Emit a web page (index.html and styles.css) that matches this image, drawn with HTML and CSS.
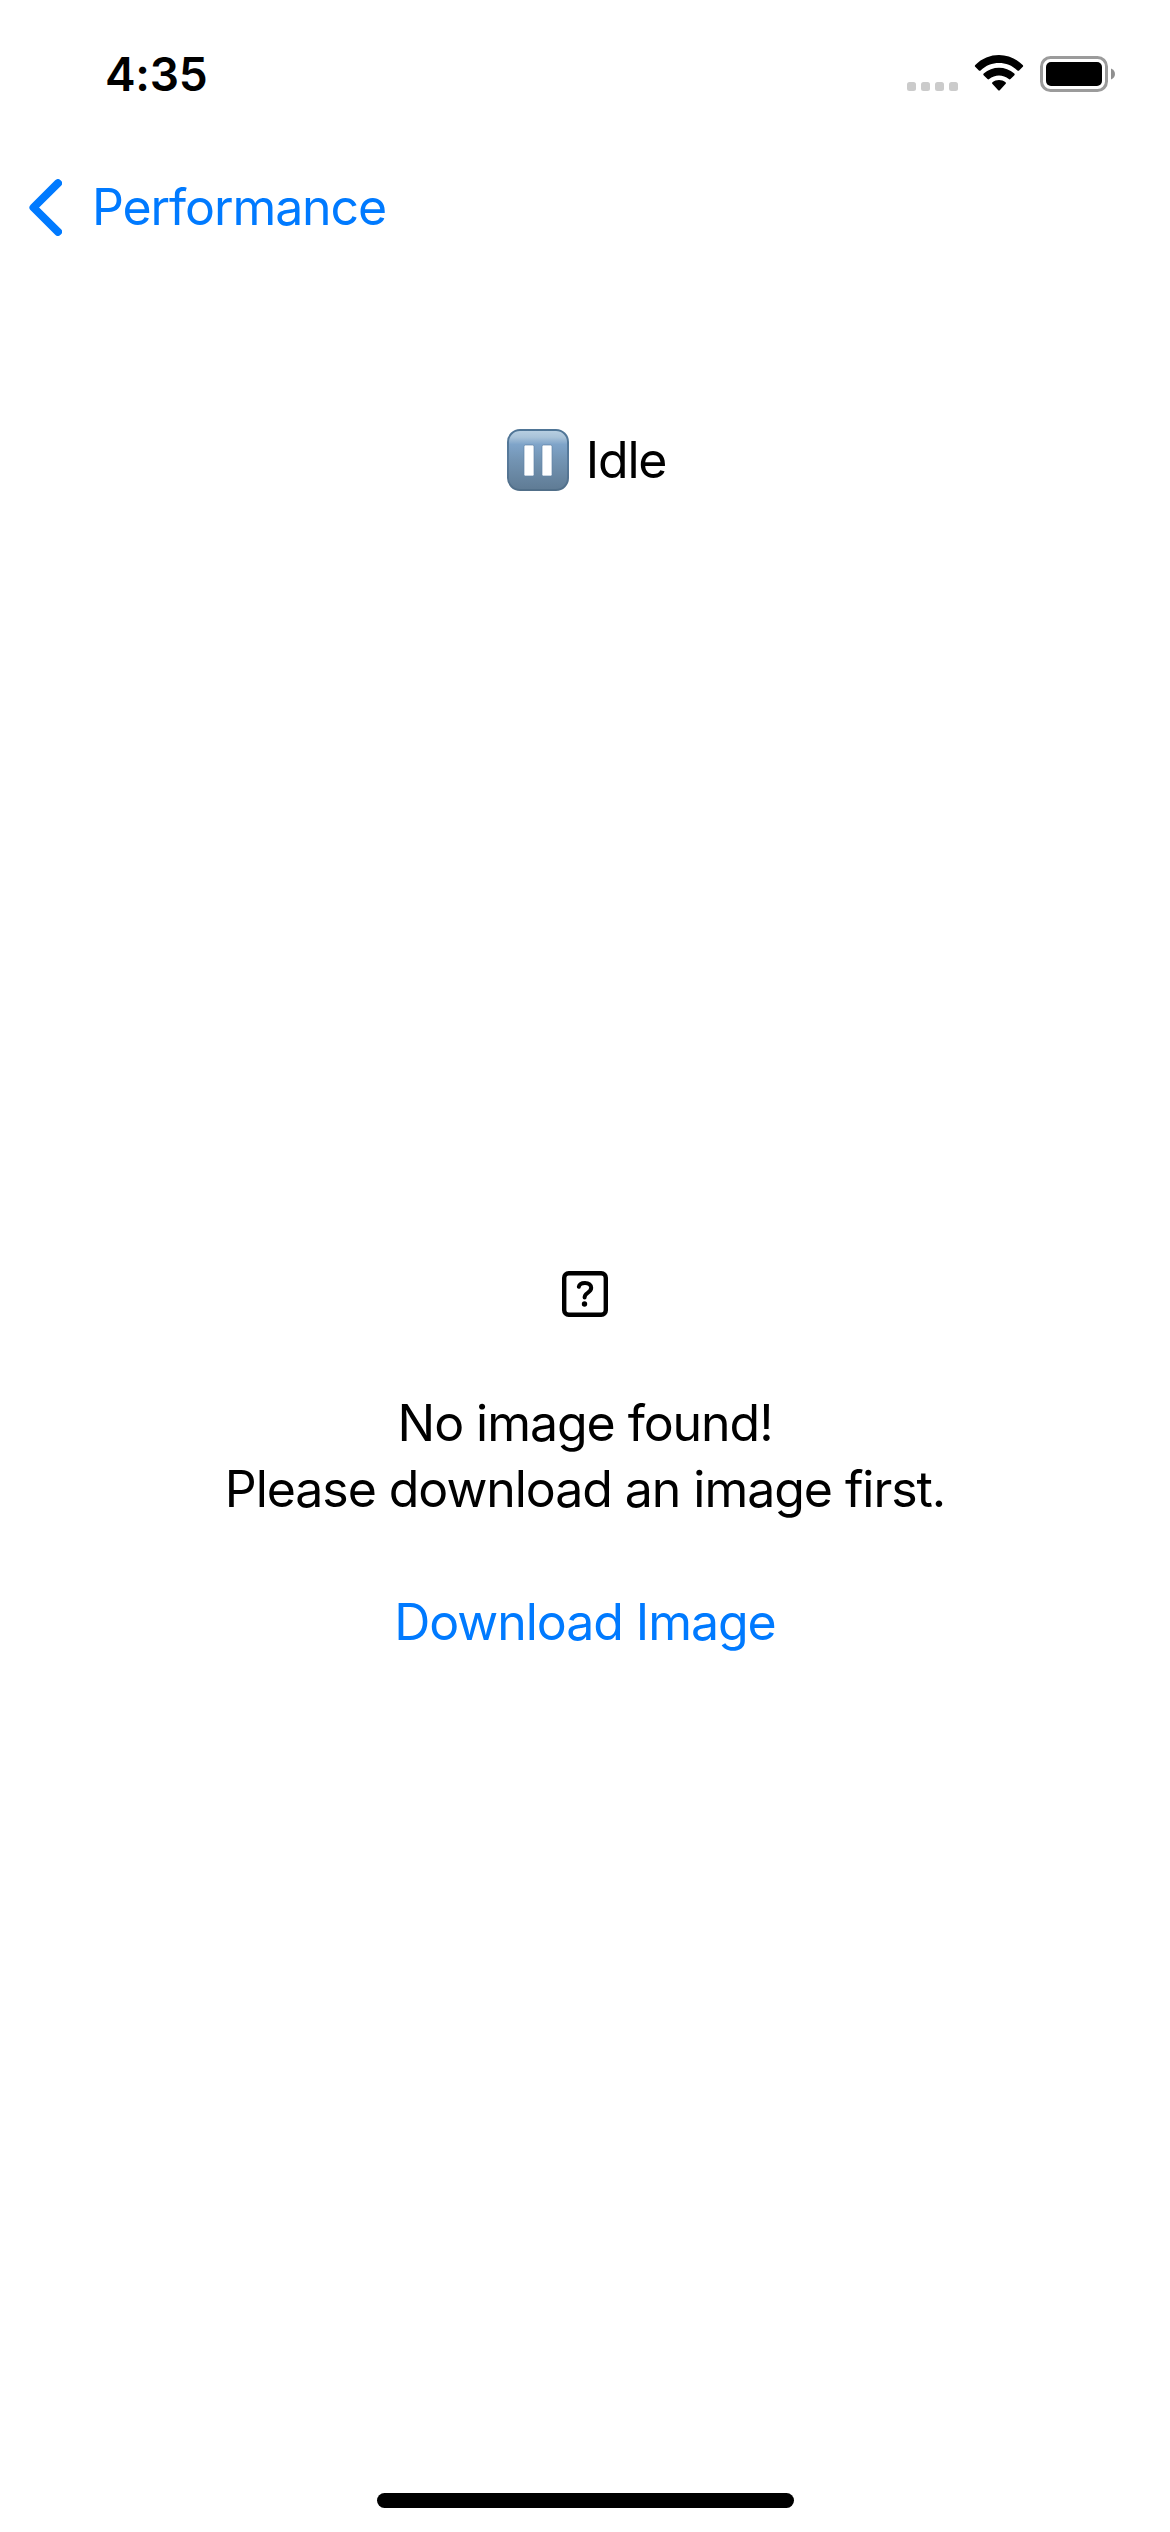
FILE: index.html
```html
<!DOCTYPE html>
<html lang="en">
<head>
<meta charset="utf-8">
<title>Performance</title>
<link rel="stylesheet" href="styles.css">
</head>
<body>
<div class="screen">
  <header class="status-bar">
    <span class="time">4:35</span>
    <div class="indicators">
      <svg class="cellular" width="51" height="9" viewBox="0 0 51 9" fill="#cbcbcb"><rect width="9" height="9" rx="2.5"/><rect x="14" width="9" height="9" rx="2.5"/><rect x="28" width="9" height="9" rx="2.5"/><rect x="42" width="9" height="9" rx="2.5"/></svg>
      <svg class="wifi" width="50" height="36" viewBox="0 0 50 36"><path d="M1.2 11.8Q0.4 10.9 1.3 10C14.5-3.3 35.5-3.3 48.7 10Q49.6 10.9 48.8 11.8L45.1 15.4Q44.3 16.2 43.4 15.4C33 5.6 17 5.6 6.6 15.4Q5.700 16.200 4.900 15.400Z"/><path d="M9.600 20.300Q8.800 19.400 9.700 18.600C18.500 10.700 31.500 10.700 40.300 18.600Q41.200 19.400 40.400 20.300L36.500 24Q35.700 24.800 34.800 24C29.200 19.300 20.800 19.300 15.200 24Q14.300 24.800 13.500 24Z"/><path d="M18.300 28.800Q17.500 27.900 18.500 27.200C22.200 24.400 27.800 24.400 31.500 27.200Q32.500 27.900 31.700 28.800L26 34.900Q25 36 24 34.900Z"/></svg>
      <svg class="battery" width="75" height="36" viewBox="0 0 75 36"><rect x="1.500" y="1.500" width="65" height="33" rx="9" fill="none" stroke="#9b9b9b" stroke-width="3"/><rect x="6" y="6" width="56" height="24" rx="5"/><path d="M71 12.500C76.300 14.500 76.300 21.500 71 23.500Z" fill="#8f8f8f"/></svg>
    </div>
  </header>
  <nav class="nav-bar">
    <a class="back"><svg width="33" height="57" viewBox="0 0 33 57"><path d="M29 4.200L4.500 28.500L29 52.800" fill="none" stroke="currentColor" stroke-width="8" stroke-linecap="round" stroke-linejoin="round"/></svg><span class="back-label">Performance</span></a>
  </nav>
  <main class="content">
    <div class="state">
      <svg width="62" height="62" viewBox="0 0 62 62">
        <defs>
          <linearGradient id="face" x2="0" y2="1"><stop offset="0" stop-color="#b9d0e2"/><stop offset=".12" stop-color="#a9c3d9"/><stop offset=".24" stop-color="#7fa4c9"/><stop offset=".5" stop-color="#7394b3"/><stop offset="1" stop-color="#5f7b94"/></linearGradient>
          <linearGradient id="rim" x2="0" y2="1"><stop offset="0" stop-color="#4f7596"/><stop offset=".5" stop-color="#587a9b"/><stop offset="1" stop-color="#516f89"/></linearGradient>
        </defs>
        <rect x="1" y="1" width="60" height="60" rx="12" fill="url(#face)" stroke="url(#rim)" stroke-width="2"/>
        <rect x="17" y="16" width="10" height="31" rx="1.500" fill="#fff" stroke="#6284a6" stroke-width=".7"/><rect x="35" y="16" width="10" height="31" rx="1.500" fill="#fff" stroke="#6284a6" stroke-width=".7"/>
      </svg>
      <span class="state-label">Idle</span>
    </div>
    <section class="empty">
      <svg width="46" height="46" viewBox="0 0 46 46" fill="none" stroke="#000" stroke-linecap="round" stroke-linejoin="round"><rect x="2.200" y="2.200" width="41.600" height="41.600" rx="4.500" stroke-width="4.400"/><path d="M16.800 15.800C17.300 12.900 19.700 11.900 23 11.900C26.800 11.900 29.200 13.800 29.200 16.800C29.200 19.500 27.500 20.700 25.400 22.100C23.300 23.500 22.600 24.500 22.600 26.600" stroke-width="4"/><circle cx="22.500" cy="33" r="2.700" fill="#000" stroke="none"/></svg>
      <p class="message"><span class="line-one">No image found!</span><br><span class="line-two">Please download an image first.</span></p>
      <a class="download">Download Image</a>
    </section>
  </main>
  <footer class="home"><div class="home-indicator"></div></footer>
</div>
</body>
</html>
```
FILE: styles.css
```css
* { box-sizing: border-box; }
body { margin: 0; background: #fff; }
.screen {
  width: 1170px;
  height: 2532px;
  display: flex;
  flex-direction: column;
  font: 400 50px/66px Inter, "Liberation Sans", sans-serif;
  color: #000;
}
.screen svg { display: block; flex: none; }
.status-bar {
  height: 141px;
  padding: 41px 55px 0 105px;
  display: flex;
  justify-content: space-between;
  align-items: flex-start;
}
.time { font-size: 46px; font-weight: 600; letter-spacing: -.3px; white-space: nowrap; }
.indicators { display: flex; padding-top: 14px; }
.cellular { margin: 27px 16px 0 0; }
.wifi { margin-right: 16px; }
.battery { margin-top: 1px; }
.nav-bar { height: 132px; padding: 33px 29px; }
.back {
  display: inline-flex;
  align-items: center;
  gap: 30px;
  color: #007aff;
}
.back-label { letter-spacing: -1.1px; }
.content { flex: 1; display: flex; flex-direction: column; align-items: center; }
.state { margin-top: 154px; padding-left: 3px; display: flex; align-items: center; gap: 17px; }
.state-label { letter-spacing: -1.2px; }
.empty {
  margin-top: 778px;
  display: flex;
  flex-direction: column;
  align-items: center;
  text-align: center;
  white-space: nowrap;
}
.message { margin: 73px 0 67px; letter-spacing: -1.05px; }
.download { color: #007aff; letter-spacing: -1.05px; }
.home { height: 39px; display: flex; justify-content: center; }
.home-indicator { width: 417px; height: 15px; border-radius: 8px; background: #000; }
```
